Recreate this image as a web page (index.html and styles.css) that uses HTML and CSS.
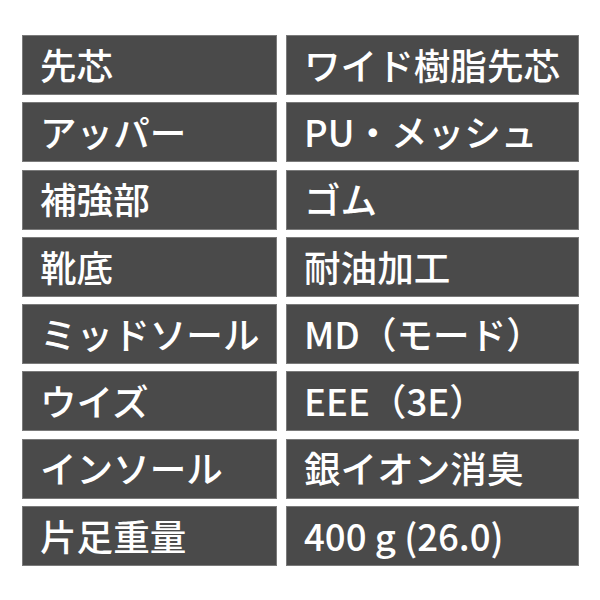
FILE: index.html
```html
<!DOCTYPE html>
<html lang="ja">
<head>
<meta charset="utf-8">
<link rel="stylesheet" href="styles.css">
</head>
<body>
<div class="spec">
  <div class="cell">先芯</div><div class="cell">ワイド樹脂先芯</div>
  <div class="cell">アッパー</div><div class="cell">PU・メッシュ</div>
  <div class="cell">補強部</div><div class="cell">ゴム</div>
  <div class="cell">靴底</div><div class="cell">耐油加工</div>
  <div class="cell">ミッドソール</div><div class="cell">MD（モード）</div>
  <div class="cell">ウイズ</div><div class="cell">EEE（3E）</div>
  <div class="cell">インソール</div><div class="cell">銀イオン消臭</div>
  <div class="cell">片足重量</div><div class="cell">400 g (26.0)</div>
</div>
</body>
</html>
```
FILE: styles.css
```css
html, body {
  margin: 0;
  padding: 0;
  background: #ffffff;
}
body {
  width: 600px;
  height: 600px;
  font-family: "Noto Sans CJK JP", "Noto Sans", sans-serif;
}
.spec {
  display: grid;
  grid-template-columns: 255px 293px;
  grid-auto-rows: 60px;
  column-gap: 9px;
  row-gap: 7.3px;
  padding: 35px 0 0 22px;
}
.cell {
  box-sizing: border-box;
  background: #4a4a4a;
  border: 1px solid #7a7a7a;
  color: #ffffff;
  font-size: 36.6px;
  font-weight: 500;
  line-height: 1;
  display: flex;
  align-items: center;
  padding-left: 17px;
  white-space: nowrap;
}
```
